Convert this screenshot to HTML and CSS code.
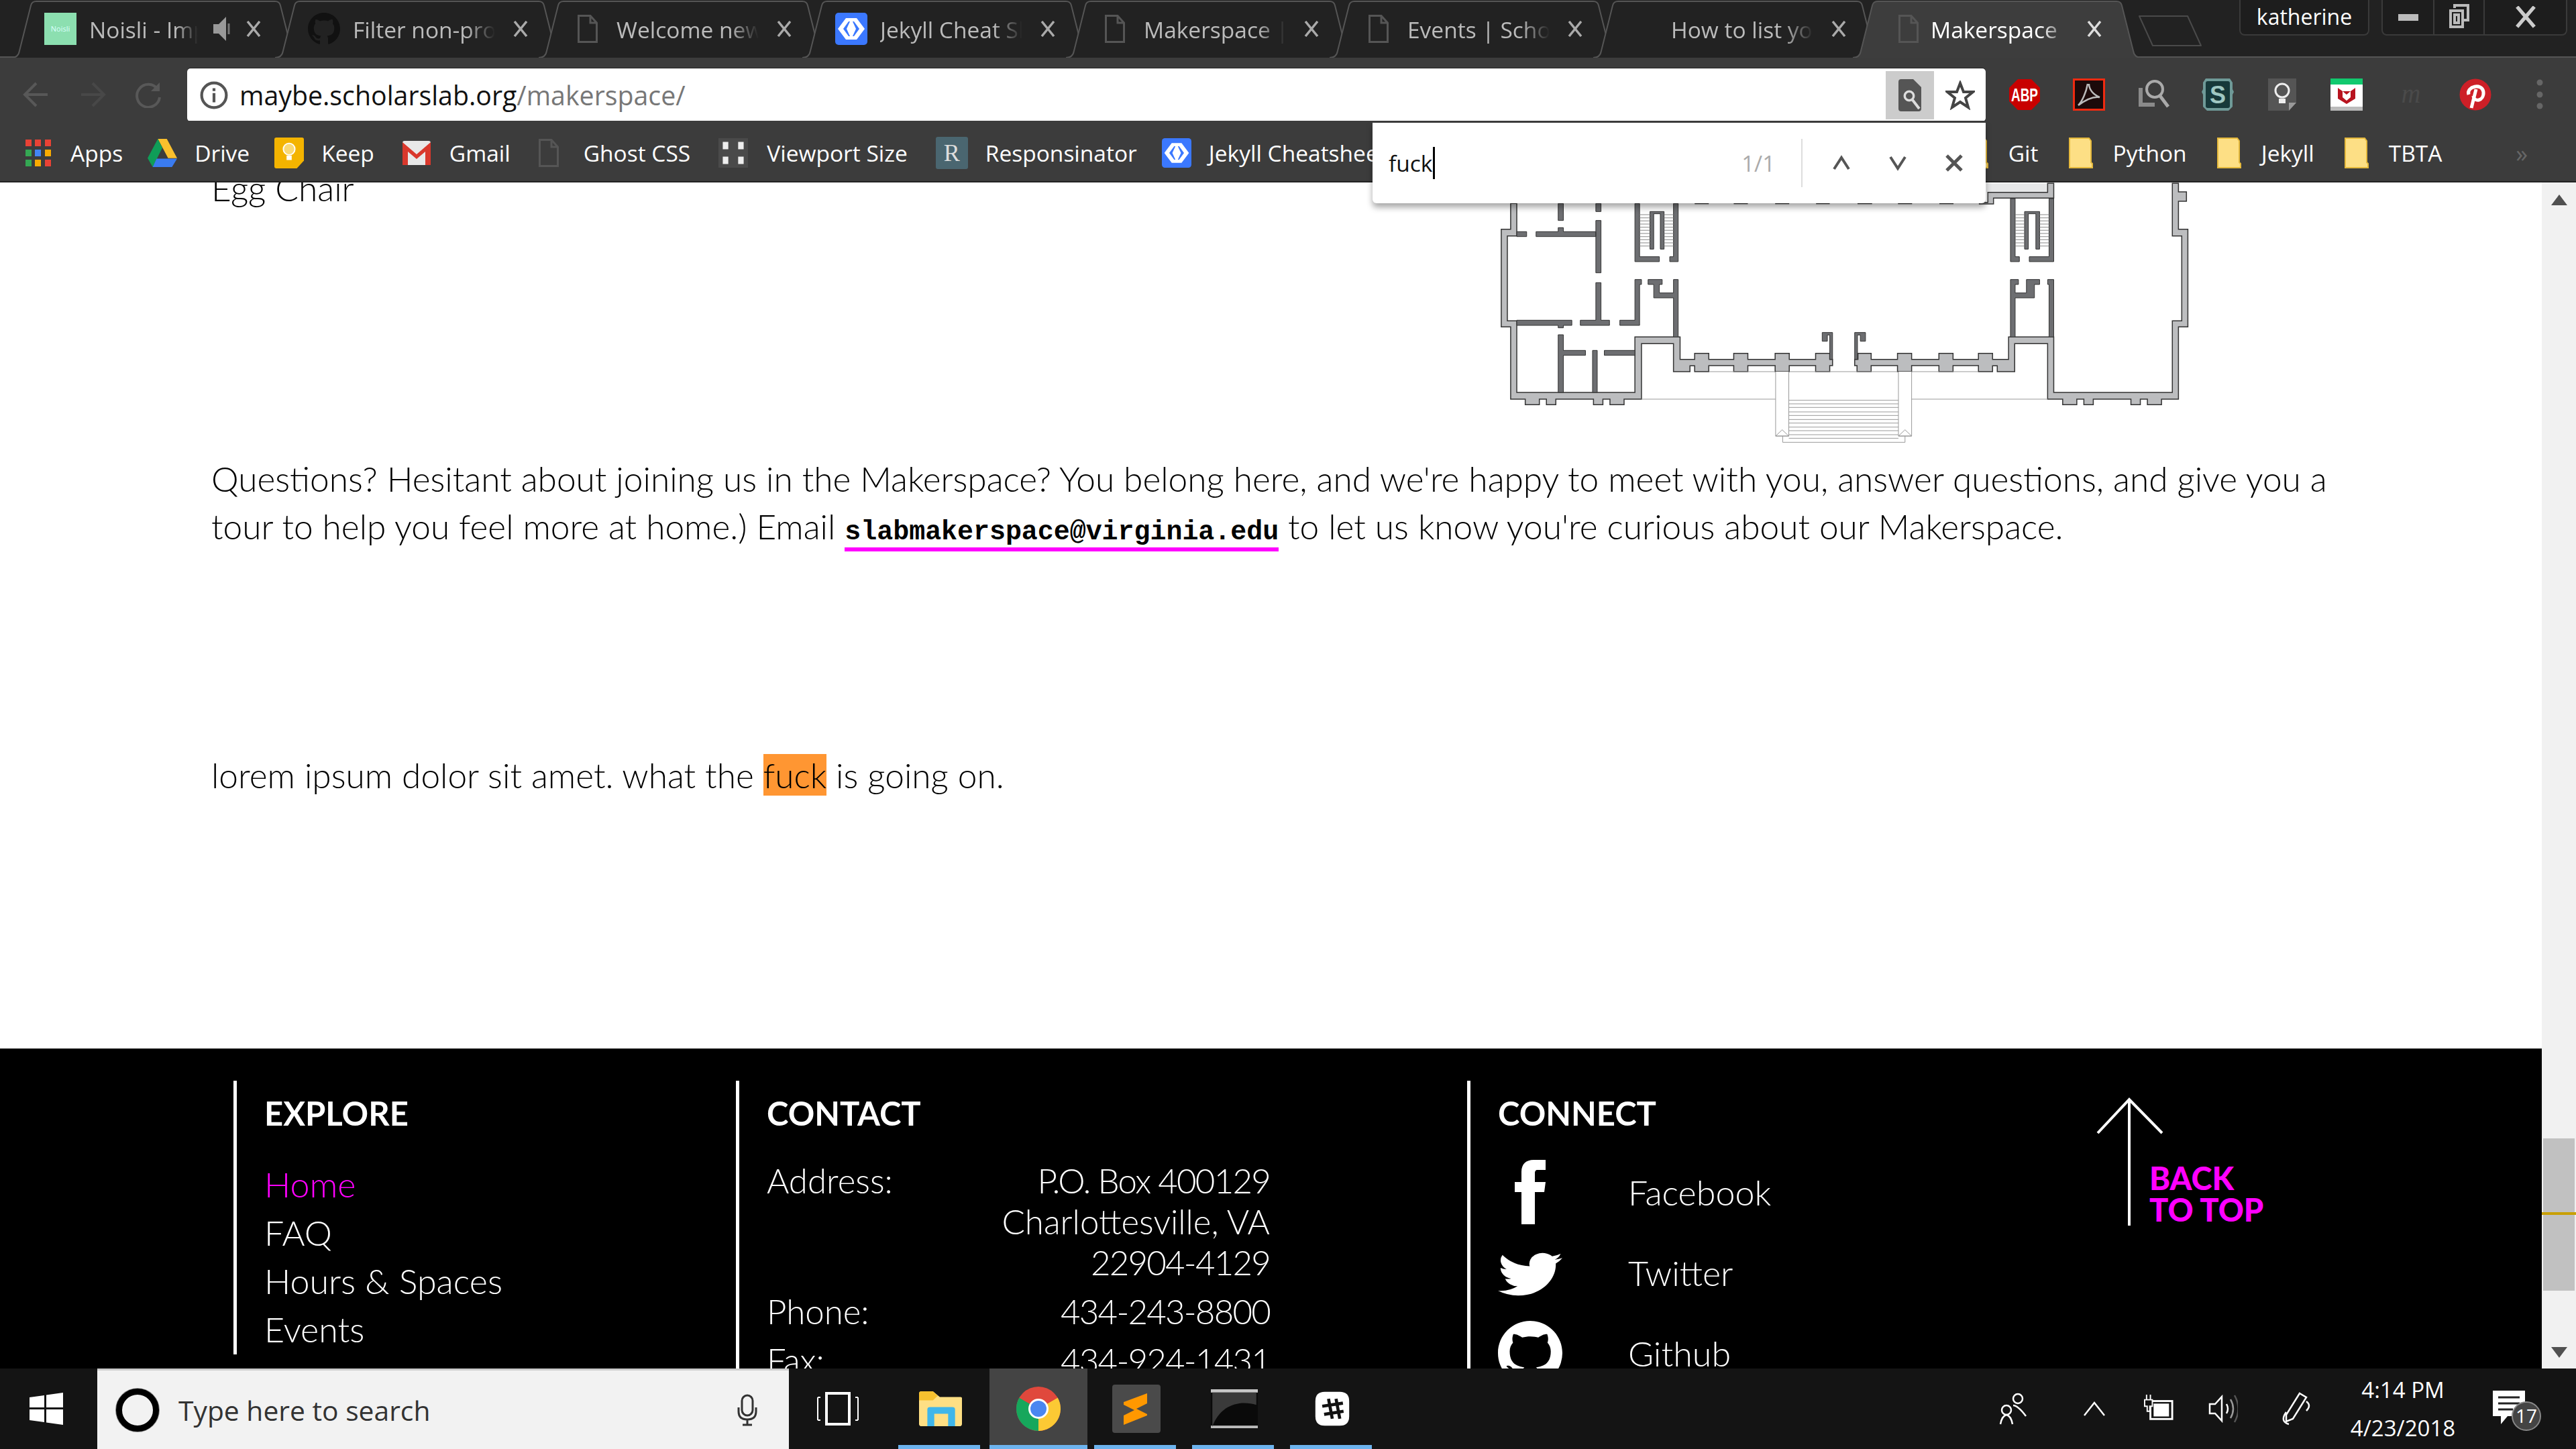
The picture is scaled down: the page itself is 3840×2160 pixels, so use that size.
FILE: index.html
```html
<!DOCTYPE html>
<html lang="en">
<head>
<meta charset="utf-8">
<title>Makerspace</title>
<link rel="stylesheet" href="styles.css">
</head>
<body>
<svg class="defs" width="0" height="0" aria-hidden="true">
  <symbol id="tabshape" viewBox="0 0 430 84" preserveAspectRatio="none"><path d="M0 84C8 84 11 80 12 74L29 8C30 4 33 2 37 2H393C397 2 400 4 401 8L418 74C419 80 422 84 430 84"/></symbol>
  <symbol id="doc" viewBox="0 0 30 42"><path d="M1.5 1.5H19L28.5 12V40.5H1.5ZM19 1.5V12H28.5" fill="none" stroke="currentColor" stroke-width="3"/></symbol>
  <symbol id="cross" viewBox="0 0 22 24"><path d="M2 1L20 23M20 1L2 23" fill="none" stroke="currentColor" stroke-width="3.500"/></symbol>
  <symbol id="jek" viewBox="0 0 48 48"><rect width="48" height="48" rx="5" fill="#3b78ff"/><path d="M16 8H32L44 24L32 40H16L4 24Z" fill="#fff"/><path d="M20 13L12 24L20 35H22L17 24L22 13ZM28 13H26L31 24L26 35H28L36 24Z" fill="#3b78ff"/></symbol>
  <symbol id="folder" viewBox="0 0 36 48"><path d="M1 2H30L33 6V38L35 40V46H1Z" fill="#fddf85" stroke="#e5b93c" stroke-width="2"/></symbol>
</svg>

<div class="screen">
  <header class="tabstrip">
    <div class="tab">
      <svg class="tabbg"><use href="#tabshape"/></svg>
      <span class="noisli">Noisli</span>
      <span class="title short">Noisli - Improve</span>
      <svg class="speaker" viewBox="0 0 30 40"><path d="M1 13H9L20 2V38L9 27H1Z" fill="#999"/><path d="M24 12V28" stroke="#777" stroke-width="3"/></svg>
      <svg class="close"><use href="#cross"/></svg>
    </div>
    <div class="tab">
      <svg class="tabbg"><use href="#tabshape"/></svg>
      <svg class="fav" viewBox="0 0 16 16"><path fill="#111" d="M8 0C3.58 0 0 3.58 0 8c0 3.54 2.29 6.53 5.47 7.59.4.07.55-.17.55-.38 0-.19-.01-.82-.01-1.49-2.01.37-2.53-.49-2.69-.94-.09-.23-.48-.94-.82-1.13-.28-.15-.68-.52-.01-.53.63-.01 1.08.58 1.23.82.72 1.21 1.87.87 2.33.66.07-.52.28-.87.51-1.07-1.78-.2-3.64-.89-3.64-3.95 0-.87.31-1.59.82-2.15-.08-.2-.36-1.02.08-2.12 0 0 .67-.21 2.2.82.64-.18 1.32-.27 2-.27.68 0 1.36.09 2 .27 1.53-1.04 2.2-.82 2.2-.82.44 1.1.16 1.92.08 2.12.51.56.82 1.27.82 2.15 0 3.07-1.87 3.75-3.65 3.95.29.25.54.73.54 1.48 0 1.07-.01 1.93-.01 2.2 0 .21.15.46.55.38A8.012 8.012 0 0 0 16 8c0-4.42-3.58-8-8-8z"/></svg>
      <span class="title">Filter non-profit events</span>
      <svg class="close"><use href="#cross"/></svg>
    </div>
    <div class="tab">
      <svg class="tabbg"><use href="#tabshape"/></svg>
      <svg class="fav docfav"><use href="#doc"/></svg>
      <span class="title">Welcome new members</span>
      <svg class="close"><use href="#cross"/></svg>
    </div>
    <div class="tab">
      <svg class="tabbg"><use href="#tabshape"/></svg>
      <svg class="fav"><use href="#jek"/></svg>
      <span class="title">Jekyll Cheat Sheet</span>
      <svg class="close"><use href="#cross"/></svg>
    </div>
    <div class="tab">
      <svg class="tabbg"><use href="#tabshape"/></svg>
      <svg class="fav docfav"><use href="#doc"/></svg>
      <span class="title">Makerspace | Scholars</span>
      <svg class="close"><use href="#cross"/></svg>
    </div>
    <div class="tab">
      <svg class="tabbg"><use href="#tabshape"/></svg>
      <svg class="fav docfav"><use href="#doc"/></svg>
      <span class="title">Events | Scholars' Lab</span>
      <svg class="close"><use href="#cross"/></svg>
    </div>
    <div class="tab">
      <svg class="tabbg"><use href="#tabshape"/></svg>
      <span class="fav"></span>
      <span class="title">How to list your events</span>
      <svg class="close"><use href="#cross"/></svg>
    </div>
    <div class="tab tab-active">
      <svg class="tabbg"><use href="#tabshape"/></svg>
      <svg class="fav docfav"><use href="#doc"/></svg>
      <span class="title">Makerspace | Scholars' Lab</span>
      <svg class="close"><use href="#cross"/></svg>
    </div>
    <svg class="newtab" viewBox="0 0 98 48"><path d="M4 2H76L96 46H24Z" fill="#222" stroke="#4a4a4a" stroke-width="2" stroke-linejoin="round"/></svg>
    <div class="profile">katherine</div>
    <div class="winctl">
      <span class="winbtn"><svg class="winicon" viewBox="0 0 30 14"><rect width="30" height="10" y="2" fill="#bbb"/></svg></span>
      <span class="winbtn"><svg class="winicon" viewBox="0 0 30 40"><path d="M8 6V2H28V24H22M2 10H20V34H2ZM8 16H14V28H8Z" fill="none" stroke="#bbb" stroke-width="4"/></svg></span>
      <span class="winbtn winclose"><svg class="winicon" viewBox="0 0 28 30"><path d="M2 1L26 29M26 1L2 29" fill="none" stroke="#ccc" stroke-width="5"/></svg></span>
    </div>
  </header>

  <div class="toolbar">
    <div class="nav">
      <svg class="navicon" viewBox="0 0 40 40"><path d="M37 20H5M20 3L3 20L20 37" fill="none" stroke="#585858" stroke-width="4"/></svg>
      <svg class="navicon" viewBox="0 0 40 40"><path d="M3 20H35M20 3L37 20L20 37" fill="none" stroke="#484848" stroke-width="4"/></svg>
      <svg class="navicon" viewBox="0 0 40 40"><path d="M33 12A17 17 0 1 0 36 24" fill="none" stroke="#585858" stroke-width="4"/><path d="M36 2V15H23Z" fill="#585858"/></svg>
    </div>
    <div class="omnibox">
      <svg class="info" viewBox="0 0 40 40"><circle cx="20" cy="20" r="17.5" fill="none" stroke="#555" stroke-width="4"/><path d="M18 17H22V30H18ZM18 10H22V14H18Z" fill="#555"/></svg>
      <span class="url">maybe.scholarslab.org<span class="url-path">/makerspace/</span></span>
      <span class="findbtn"><svg class="findicon" viewBox="0 0 34 48"><path d="M0 4Q0 0 4 0H22L34 12V44Q34 48 30 48H4Q0 48 0 44Z" fill="#555"/><circle cx="16" cy="25" r="8" fill="#ddd" stroke="#ddd"/><circle cx="16" cy="25" r="5" fill="#555"/><path d="M21 31L31 44" stroke="#ddd" stroke-width="4"/></svg></span>
      <svg class="star" viewBox="0 0 44 44"><path d="M22 4L27 17H41L30 26L34 40L22 32L10 40L14 26L3 17H17Z" fill="none" stroke="#444" stroke-width="4"/></svg>
    </div>
    <div class="exts">
      <svg class="ext" viewBox="0 0 48 48"><path d="M14 1H34L47 14V34L34 47H14L1 34V14Z" fill="#c80000"/><text x="24" y="34" class="abp" textLength="40" lengthAdjust="spacingAndGlyphs">ABP</text></svg>
      <svg class="ext" viewBox="0 0 48 48"><rect x="1.5" y="1.5" width="45" height="45" fill="#1c0a0a" stroke="#f02a10" stroke-width="3"/><path d="M22 8C20 20 14 34 8 40C16 34 28 26 40 28C30 24 24 16 24 8" fill="none" stroke="#bbb" stroke-width="2.5"/></svg>
      <svg class="ext" viewBox="0 0 48 48"><circle cx="26" cy="16" r="12" fill="none" stroke="#aaa" stroke-width="4"/><path d="M34 26L46 42" stroke="#aaa" stroke-width="5"/><path d="M2 14H8V36H26V42H2Z" fill="#8a8a8a"/></svg>
      <svg class="ext" viewBox="0 0 48 48"><path d="M6 0H42L46 6V16L48 20L46 24V42L40 48H8L2 42V24L0 20L2 16V6Z" fill="#6f9a98"/><rect x="6" y="4" width="36" height="40" rx="3" fill="#17393a"/><text x="24" y="37" class="sbl">S</text></svg>
      <svg class="ext" viewBox="0 0 48 48"><path d="M3 0H45V36L34 48H3Z" fill="#555"/><path d="M45 36H34V48Z" fill="#999"/><circle cx="24" cy="18" r="10" fill="none" stroke="#eee" stroke-width="3"/><path d="M19 30H29V37H19Z" fill="#eee"/></svg>
      <svg class="ext" viewBox="0 0 48 48"><rect width="48" height="48" rx="3" fill="#fff"/><rect width="48" height="9" fill="#11c96e"/><rect y="42" width="48" height="6" fill="#bbb"/><path d="M11 14L18 19H30L37 14V30L24 38L11 30Z" fill="#b8141f"/><path d="M18 19V28L24 33L30 28V19L24 24Z" fill="#fff"/></svg>
      <svg class="ext" viewBox="0 0 48 48"><text x="24" y="36" class="mext">m</text></svg>
      <svg class="ext" viewBox="0 0 48 48"><circle cx="24" cy="24" r="23.5" fill="#cd1f27"/><path d="M18 44L25 16M14 24C10 12 34 6 36 20C37 34 22 36 21 26" fill="none" stroke="#fff" stroke-width="5"/></svg>
      <svg class="ext" viewBox="0 0 48 48"><circle cx="24" cy="6" r="4.5" fill="#666"/><circle cx="24" cy="24" r="4.5" fill="#666"/><circle cx="24" cy="41" r="4.5" fill="#666"/></svg>
    </div>
  </div>

  <nav class="bookmarks">
    <a class="bm"><svg class="bmicon" viewBox="0 0 40 48"><g><rect x="1" y="4" width="9" height="10" fill="#e94235"/><rect x="15" y="4" width="9" height="10" fill="#e94235"/><rect x="30" y="4" width="9" height="10" fill="#e94235"/><rect x="1" y="19" width="9" height="10" fill="#34a853"/><rect x="15" y="19" width="9" height="10" fill="#4285f4"/><rect x="30" y="19" width="9" height="10" fill="#f9ab00"/><rect x="1" y="34" width="9" height="10" fill="#34a853"/><rect x="15" y="34" width="9" height="10" fill="#f9ab00"/><rect x="30" y="34" width="9" height="10" fill="#e94235"/></g></svg>Apps</a>
    <a class="bm"><svg class="bmicon" viewBox="0 0 46 48"><path d="M16 2H30L46 32H32Z" fill="#fbc02d"/><path d="M16 2L23 16L8 46L0 32Z" fill="#0f9d58"/><path d="M14 33H46L38 46H8Z" fill="#3a7bf0"/></svg>Drive</a>
    <a class="bm"><svg class="bmicon" viewBox="0 0 46 48"><path d="M3 0H43Q46 0 46 3V36L35 48H3Q0 48 0 45V3Q0 0 3 0Z" fill="#f4b400"/><circle cx="23" cy="18" r="9" fill="#f9d976" stroke="#fff" stroke-width="2"/><rect x="19" y="28" width="8" height="7" fill="#fff"/></svg>Keep</a>
    <a class="bm bm-gmail"><svg class="bmicon gm" viewBox="0 0 42 48"><rect y="6" width="42" height="36" rx="3" fill="#e8e8e8"/><path d="M0 8L21 26L42 8V42H34V22L21 33L8 22V42H0Z" fill="#d9382c"/></svg>Gmail</a>
    <a class="bm bm-ghost"><svg class="bmicon docbm" viewBox="0 0 30 42"><use href="#doc"/></svg>Ghost CSS</a>
    <a class="bm bm-view"><svg class="bmicon" viewBox="0 0 48 48"><rect width="48" height="48" fill="#4a4a4a"/><rect x="7" y="6" width="9" height="12" fill="#eee"/><rect x="32" y="6" width="9" height="12" fill="#eee"/><rect x="7" y="30" width="9" height="12" fill="#eee"/><rect x="32" y="30" width="9" height="12" fill="#eee"/></svg>Viewport Size</a>
    <a class="bm bm-resp"><span class="ricon">R</span>Responsinator</a>
    <a class="bm bm-wide"><svg class="bmicon"><use href="#jek"/></svg><span class="bm-clip">Jekyll Cheatsheet</span></a>
    <a class="bm bm-folder"><svg class="bmicon folderic"><use href="#folder"/></svg>Git</a>
    <a class="bm bm-folder"><svg class="bmicon folderic"><use href="#folder"/></svg>Python</a>
    <a class="bm bm-folder"><svg class="bmicon folderic"><use href="#folder"/></svg>Jekyll</a>
    <a class="bm bm-folder"><svg class="bmicon folderic"><use href="#folder"/></svg>TBTA</a>
    <span class="more">»</span>
  </nav>

  <div class="findbar">
    <span class="findtext">fuck<span class="caret"></span></span>
    <span class="findcount">1/1</span>
    <span class="finddiv"></span>
    <svg class="findarrow" viewBox="0 0 28 24"><path d="M3 21L14 4L25 21" fill="none" stroke="#555" stroke-width="4"/></svg>
    <svg class="findarrow" viewBox="0 0 28 24"><path d="M3 3L14 20L25 3" fill="none" stroke="#555" stroke-width="4"/></svg>
    <svg class="findarrow" viewBox="0 0 28 28"><path d="M3 3L25 25M25 3L3 25" fill="none" stroke="#555" stroke-width="5"/></svg>
  </div>

  <div class="viewport">
    <main class="page">
      <section class="upper">
        <p class="egg">Egg Chair</p>
        <svg class="plan" viewBox="0 0 1568 1200" preserveAspectRatio="none">
          <g class="floor-light">
            <rect x="1085" y="10" width="130" height="40" fill="#e6e7e8"/>
            <path d="M74 100V215H54V652H74V975H105V1000H135V975H150V1000H170V975H250V1000H270V975H285V1000H315V975H352V727H420V852H455V826H465V852H495V825H548V852H578V825H636V852H666V825H722V852H752V825H758V797H752V770H722V797H666V770H636V797H578V770H548V797H495V770H465V797H434V697H338V945H87V625H67V245H87V100Z"/>
            <path d="M1480 10H1493V48H1510V90H1493V215H1513V652H1493V975H1457V1000H1427V975H1412V1000H1392V975H1312V1000H1292V975H1277V1000H1247V975H1215V727H1145V852H1108V826H1098V852H1068V825H1014V852H984V825H926V852H896V825H840V852H810V825H805V797H812V770H840V797H896V770H926V797H984V770H1014V797H1068V770H1098V797H1132V697H1228V945H1480V625H1500V245H1480Z"/>
            <path d="M1215 10H1228V76H1100V102H1070V95H1088V50H1215Z"/>
          </g>
          <g class="floor-dark">
            <path d="M175 100H186V176H175ZM255 100H266V136H255ZM255 176H266V410H255ZM255 454H266V622H284V645H222V622H255ZM87 226H108V248H87ZM128 226H175V208H186V226H255V248H128ZM87 622H204V645H186V656H175V645H87Z"/>
            <path d="M306 622H338V440H352V462H348V645H306ZM338 100H348V338H390V360H338ZM420 100H430V360H412V338H420ZM366 440H396V462H390V500H420V440H430V697H420V522H378V462H366Z"/>
            <path d="M175 687H186V757H233V779H186V945H175ZM248 757H258V945H248ZM273 757H338V779H273ZM736 677H758V797H752V688H747V716H736ZM805 677H828V716H817V688H811V797H805Z"/>
            <path d="M1136 78H1146V338H1155V360H1136ZM1218 78H1228V360H1176V338H1218ZM1136 440H1153V462H1146V500H1170V440H1198V462H1187V522H1146V697H1136ZM1215 440H1228V697H1218V462H1215Z"/>
            <path d="M370 136H400V304H392V146H378V304H370ZM1166 136H1198V304H1190V146H1174V304H1166Z"/>
          </g>
          <path class="plan-dash" d="M465 100H495M548 100H578M636 100H666M723 100H752M811 100H842M897 100H927M985 100H1015"/>
          <path class="stair-fine" d="M348 150H370M348 164H370M348 178H370M348 192H370M348 206H370M348 220H370M348 234H370M348 248H370M348 262H370M348 276H370M348 290H370M400 150H420M400 164H420M400 178H420M400 192H420M400 206H420M400 220H420M400 234H420M400 248H420M400 262H420M400 276H420M400 290H420M1146 150H1166M1146 164H1166M1146 178H1166M1146 192H1166M1146 206H1166M1146 220H1166M1146 234H1166M1146 248H1166M1146 262H1166M1146 276H1166M1146 290H1166M1198 150H1218M1198 164H1218M1198 178H1218M1198 192H1218M1198 206H1218M1198 220H1218M1198 234H1218M1198 248H1218M1198 262H1218M1198 276H1218M1198 290H1218"/>
          <path class="stair-line" d="M352 975H637M926 975H1215M495 852H636M666 852H896M926 852H1068M637 852V1140H665V852M898 852V1140H926V852M652 1140V1168H912V1140M665 980H898M665 996H898M665 1012H898M665 1032H898M665 1048H898M665 1066H898M665 1082H898M665 1100H898M665 1116H898M665 1134H898M665 1150H898M637 1140L651 1112L665 1140ZM898 1140L912 1112L926 1140Z"/>
        </svg>
      </section>
      <p class="para">Questions? Hesitant about joining us in the Makerspace? You belong here, and we're happy to meet with you, answer questions, and give you a tour to help you feel more at home.) Email <a class="mail">slabmakerspace@virginia.edu</a> to let us know you're curious about our Makerspace.</p>
      <p class="para para-lorem">lorem ipsum dolor sit amet. what the <mark class="hit">fuck</mark> is going on.</p>
      <footer class="footer">
        <div class="col col-explore">
          <h3 class="colhead">EXPLORE</h3>
          <ul class="links">
            <li class="current">Home</li>
            <li>FAQ</li>
            <li>Hours &amp; Spaces</li>
            <li>Events</li>
          </ul>
        </div>
        <div class="col">
          <h3 class="colhead">CONTACT</h3>
          <dl class="contact">
            <dt>Address:</dt><dd><span class="num">P.O. Box 400129</span><br>Charlottesville, VA<br><span class="num">22904-4129</span></dd>
            <dt>Phone:</dt><dd class="num">434-243-8800</dd>
            <dt>Fax:</dt><dd class="num">434-924-1431</dd>
          </dl>
        </div>
        <div class="col">
          <h3 class="colhead">CONNECT</h3>
          <div class="social"><span class="socicon"><svg class="fb" viewBox="0 0 46 96"><path d="M10 96V48H0V33H10V18C10 6 17 0 28 0H46V15H34C31 15 30 17 30 20V33H46L44 48H30V96Z" fill="#fff"/></svg></span>Facebook</div>
          <div class="social"><span class="socicon"><svg class="tw" viewBox="0 0 16 16" preserveAspectRatio="none"><path fill="#fff" d="M5.026 15c6.038 0 9.341-5.003 9.341-9.334 0-.14 0-.282-.006-.422A6.685 6.685 0 0 0 16 3.542a6.658 6.658 0 0 1-1.889.518 3.301 3.301 0 0 0 1.447-1.817 6.533 6.533 0 0 1-2.087.793A3.286 3.286 0 0 0 7.875 6.03a9.325 9.325 0 0 1-6.767-3.429 3.289 3.289 0 0 0 1.018 4.382A3.323 3.323 0 0 1 .64 6.575v.045a3.288 3.288 0 0 0 2.632 3.218 3.203 3.203 0 0 1-.865.115 3.23 3.23 0 0 1-.614-.057 3.283 3.283 0 0 0 3.067 2.277A6.588 6.588 0 0 1 .78 13.58a6.32 6.32 0 0 1-.78-.045A9.344 9.344 0 0 0 5.026 15z"/></svg></span>Twitter</div>
          <div class="social"><span class="socicon"><svg class="gh" viewBox="0 0 16 16"><path fill="#fff" d="M8 0C3.58 0 0 3.58 0 8c0 3.54 2.29 6.53 5.47 7.59.4.07.55-.17.55-.38 0-.19-.01-.82-.01-1.49-2.01.37-2.53-.49-2.69-.94-.09-.23-.48-.94-.82-1.13-.28-.15-.68-.52-.01-.53.63-.01 1.08.58 1.23.82.72 1.21 1.87.87 2.33.66.07-.52.28-.87.51-1.07-1.78-.2-3.64-.89-3.64-3.95 0-.87.31-1.59.82-2.15-.08-.2-.36-1.02.08-2.12 0 0 .67-.21 2.2.82.64-.18 1.32-.27 2-.27.68 0 1.36.09 2 .27 1.53-1.04 2.2-.82 2.2-.82.44 1.1.16 1.92.08 2.12.51.56.82 1.27.82 2.15 0 3.07-1.87 3.75-3.65 3.95.29.25.54.73.54 1.48 0 1.07-.01 1.93-.01 2.2 0 .21.15.46.55.38A8.012 8.012 0 0 0 16 8c0-4.42-3.58-8-8-8z"/></svg></span>Github</div>
        </div>
        <a class="backtop">
          <svg class="uparrow" viewBox="0 0 100 192"><path d="M49 192V4M2 54L49 4L98 54" fill="none" stroke="#fff" stroke-width="4"/></svg>
          <span class="backtext">BACK<br>TO TOP</span>
        </a>
      </footer>
    </main>
    <aside class="scrollbar">
      <svg class="sbarrow" viewBox="0 0 26 20"><path d="M13 2L25 18H1Z" fill="#505050"/></svg>
      <div class="sbtrack"><div class="sbthumb"><span class="sbmark"></span></div></div>
      <svg class="sbarrow" viewBox="0 0 26 20"><path d="M1 2H25L13 18Z" fill="#505050"/></svg>
    </aside>
  </div>

  <div class="taskbar">
    <div class="start"><svg class="winlogo" viewBox="0 0 50 48"><path d="M0 7L22 4V22H0ZM25 3.500L50 0V22H25ZM0 25H22V44L0 41ZM25 25H50V48L25 44.500Z" fill="#fff"/></svg></div>
    <div class="search">
      <span class="cortana"></span>
      <span class="searchtext">Type here to search</span>
      <svg class="mic" viewBox="0 0 32 48"><rect x="8" y="2" width="16" height="30" rx="8" fill="none" stroke="#333" stroke-width="3"/><path d="M3 20V26Q3 38 16 38Q29 38 29 26V20M16 38V46M9 46H23" fill="none" stroke="#333" stroke-width="3"/></svg>
    </div>
    <div class="task">
      <svg class="taskicon tv" viewBox="0 0 62 50"><path d="M1 8V42M1 8H5M1 42H5M61 8V42M61 8H57M61 42H57" fill="none" stroke="#fff" stroke-width="2"/><rect x="14" y="2" width="34" height="46" fill="none" stroke="#fff" stroke-width="4"/></svg>
    </div>
    <div class="task task-run task-explorer">
      <svg class="taskicon ic-folder" viewBox="0 0 62 62" preserveAspectRatio="none"><path d="M0 4Q0 0 4 0H20L30 10H60Q62 10 62 12V58Q62 62 58 62H4Q0 62 0 58Z" fill="#fedf84"/><path d="M0 4Q0 0 4 0H20L27 8L20 16H0Z" fill="#f7c12f"/><path d="M12 62V32Q12 28 16 28H48Q52 28 52 32V62H42V40H22V62Z" fill="#3fb6ea"/></svg>
    </div>
    <div class="task task-run task-active">
      <svg class="taskicon" viewBox="0 0 66 66"><circle cx="33" cy="33" r="33" fill="#e0483c"/><path d="M33 33L4.400 16.500A33 33 0 0 0 33 66Z" fill="#16a75c"/><path d="M33 33L33 66A33 33 0 0 0 61.600 16.500Z" fill="#fcc934"/><path d="M33 33L4.400 16.500L33 16.500H61.600Z" fill="#e0483c"/><circle cx="33" cy="33" r="15" fill="#fff"/><circle cx="33" cy="33" r="12" fill="#4a86f0"/></svg>
    </div>
    <div class="task task-run">
      <svg class="taskicon ic-sublime" viewBox="0 0 72 72"><rect width="72" height="72" rx="4" fill="#4a4a4a"/><path d="M52 13V28L36 36L52 44V46L17 60V46L33 38L17 30V26Z" fill="#ff9800"/></svg>
    </div>
    <div class="task task-run">
      <svg class="taskicon ic-term" viewBox="0 0 62 60" preserveAspectRatio="none"><rect width="62" height="60" fill="#0a0a0a"/><rect width="62" height="5" fill="#c8c8c8"/><rect y="56" width="62" height="4" fill="#bbb"/><path d="M2 5H60V24C38 16 12 24 2 58Z" fill="#3a3a3a"/></svg>
    </div>
    <div class="task task-run">
      <svg class="taskicon ic-slack" viewBox="0 0 60 60"><path d="M18 3H42Q57 3 57 18V42Q57 57 42 57H18Q3 57 3 42V18Q3 3 18 3Z" fill="#fff"/><path d="M24 14L30 46M36 14L42 46M14 26L47 21M17 39L48 34" stroke="#111" stroke-width="5" fill="none"/></svg>
    </div>
    <div class="tray">
      <span class="traycell tc-120"><svg class="trayicon" viewBox="0 0 44 50"><circle cx="28" cy="10" r="7" fill="none" stroke="#fff" stroke-width="2.500"/><circle cx="11" cy="27" r="7" fill="none" stroke="#fff" stroke-width="2.500"/><path d="M2 48Q4 36 11 34Q18 36 20 48M21 20Q28 20 40 36" fill="none" stroke="#fff" stroke-width="2.500"/></svg></span>
      <span class="traycell tc-120"><svg class="trayicon chev" viewBox="0 0 36 24"><path d="M3 22L18 3L33 22" fill="none" stroke="#fff" stroke-width="2.500"/></svg></span>
      <span class="traycell tc-72"><svg class="trayicon" viewBox="0 0 46 44"><rect x="10" y="10" width="34" height="28" fill="none" stroke="#fff" stroke-width="3"/><rect x="15" y="14" width="24" height="20" fill="#fff"/><path d="M4 0V8M10 0V8M1 8H13V18H9V26H5V18H1Z" stroke="#fff" fill="#111" stroke-width="2"/></svg></span>
      <span class="traycell tc-120"><svg class="trayicon" viewBox="0 0 44 48"><path d="M2 17H10L20 6V42L10 31H2Z" fill="none" stroke="#fff" stroke-width="2.500"/><path d="M27 17Q31 24 27 31" fill="none" stroke="#fff" stroke-width="2.500"/><path d="M33 10Q41 24 33 38" fill="none" stroke="#999" stroke-width="2.500"/><path d="M39 4Q50 24 39 44" fill="none" stroke="#555" stroke-width="2.500"/></svg></span>
      <span class="traycell tc-96"><svg class="trayicon" viewBox="0 0 44 50"><path d="M28 2L38 8L18 40L8 44L8 34Z" fill="none" stroke="#fff" stroke-width="2.500"/><path d="M38 14Q46 20 38 28M8 30Q-2 44 12 48" fill="none" stroke="#fff" stroke-width="2.500"/></svg></span>
      <span class="clock"><span>4:14 PM</span><span>4/23/2018</span></span>
      <span class="traycell tc-92 notif">
        <svg class="note" viewBox="0 0 48 54"><path d="M0 0H48V38H22L12 50V38H0Z" fill="#fff"/><path d="M8 10H40M8 19H40M8 28H30" stroke="#222" stroke-width="3"/></svg>
        <span class="badge">17</span>
      </span>
    </div>
  </div>
</div>
</body>
</html>
```
FILE: styles.css
```css
* { box-sizing: border-box; }
html, body { margin: 0; padding: 0; background: #fff; }
.defs { position: absolute; }
.screen { position: relative; width: 3840px; height: 2160px; display: flex; flex-direction: column; overflow: hidden; font-family: "Open Sans", "Noto Sans", sans-serif; }

/* tab strip */
.tabstrip { height: 86px; flex: none; display: flex; align-items: flex-end; padding-left: 17px; background: #222; border-bottom: 2px solid #555; color: #bbb; }
.tab { position: relative; flex: none; width: 430px; height: 86px; margin-right: -37px; margin-bottom: -2px; display: flex; align-items: center; padding-left: 49px; font-size: 33.500px; }
.tabbg { position: absolute; left: 0; top: 0; width: 430px; height: 86px; fill: #222; stroke: #555; stroke-width: 2px; }
.tab > :not(.tabbg) { position: relative; }
.tab-active { margin-left: -6px; margin-right: 0; padding-left: 59px; color: #fff; }
.tab-active .tabbg { fill: #3d3d3d; }
.tab-active .title { width: 205px; margin-left: 9px; }
.tab-active .close { margin-left: 28px; color: #ddd; }
.fav { width: 48px; height: 48px; flex: none; color: #555; }
.docfav { width: 30px; height: 42px; margin: 0 9px; }
.noisli { width: 48px; height: 48px; flex: none; background: #8cdfb0; color: #dff; font-size: 11px; line-height: 48px; text-align: center; }
.title { width: 212px; margin-left: 19px; margin-top: 1px; white-space: nowrap; overflow: hidden; flex: none; -webkit-mask-image: linear-gradient(to right, #000 80%, transparent 100%); mask-image: linear-gradient(to right, #000 80%, transparent 100%); }
.short { width: 162px; }
.speaker { width: 30px; height: 40px; margin-left: 22px; flex: none; }
.close { width: 22px; height: 24px; margin-left: 27px; flex: none; color: #aaa; }
.short ~ .close { margin-left: 20px; }
.newtab { width: 98px; height: 48px; flex: none; margin: 0 0 14px -7px; align-self: flex-end; }
.profile { width: 194px; height: 53px; margin-left: 55px; align-self: flex-start; flex: none; background: #1d1d1d; border: 2px solid #3a3a3a; border-top: 0; border-radius: 0 0 8px 8px; color: #fff; font-size: 32px; line-height: 50px; text-align: center; }
.winctl { width: 277px; height: 53px; margin-left: 18px; align-self: flex-start; flex: none; display: flex; background: #1d1d1d; border: 2px solid #3a3a3a; border-top: 0; border-radius: 0 0 8px 8px; }
.winbtn { width: 75px; flex: none; display: flex; align-items: center; justify-content: center; border-left: 2px solid #3a3a3a; }
.winbtn:first-child { border-left: 0; }
.winclose { width: auto; flex: 1; }
.winicon { width: 30px; max-height: 40px; }

/* toolbar */
.toolbar { height: 94px; flex: none; display: flex; align-items: flex-start; padding-top: 16px; background: #3c3c3c; }
.nav { width: 279px; height: 78px; flex: none; display: flex; align-items: center; padding-left: 34px; gap: 44px; }
.navicon { width: 40px; height: 40px; flex: none; }
.omnibox { width: 2681px; height: 79px; flex: none; display: flex; align-items: center; padding-left: 19px; background: #fff; border-radius: 5px; box-shadow: 0 -1px 0 #222, 0 1px 0 #222; }
.info { width: 42px; height: 42px; flex: none; }
.url { margin-left: 17px; font-size: 39.300px; color: #111; flex: none; }
.url-path { color: #777; }
.findbtn { width: 72px; height: 72px; margin-left: auto; display: flex; align-items: center; justify-content: center; background: #ccc; }
.findicon { width: 34px; height: 48px; }
.star { width: 44px; height: 44px; margin: 0 16px 0 17px; }
.exts { display: flex; gap: 48px; margin: 15px 0 0 34px; }
.ext { width: 48px; height: 48px; flex: none; }
.abp { font: 700 28px "Liberation Sans", sans-serif; fill: #fff; text-anchor: middle; }
.sbl { font: 700 36px "Liberation Sans", sans-serif; fill: #9fc7c2; text-anchor: middle; }
.mext { font: italic 40px "Liberation Serif", serif; fill: #4a4a4a; text-anchor: middle; }

/* bookmarks */
.bookmarks { height: 92px; flex: none; display: flex; align-items: center; padding: 6px 0 0 35px; gap: 37px; background: #3c3c3c; border-bottom: 2px solid #222; color: #fff; font-size: 33.500px; white-space: nowrap; overflow: hidden; }
.bm { display: flex; align-items: center; gap: 26px; flex: none; }
.bmicon { width: 44px; height: 48px; flex: none; }
.gm { width: 42px; }
.docbm { width: 30px; height: 42px; margin: 0 11px 0 3px; color: #555; }
.folderic { width: 36px; }
.ricon { width: 48px; height: 48px; flex: none; background: #4a6670; border-radius: 3px; color: #ddd; font: 36px/48px "Liberation Serif", serif; text-align: center; }
.bm-gmail { margin-left: 5px; gap: 28px; }
.bm-ghost { margin-left: 2px; }
.bm-view { margin-left: 5px; gap: 28px; }
.bm-resp { margin-left: 5px; }
.bm-wide { width: 1159px; }
.bm-clip { flex: none; }
.bm-folder { gap: 30px; margin-left: 8px; }
.bm-wide + .bm-folder { margin-left: 0; }
.more { margin-left: auto; margin-right: 72px; color: #666; font-size: 36px; }

/* find bar */
.findbar { position: absolute; left: 2046px; top: 183px; width: 914px; height: 120px; display: flex; align-items: center; padding-left: 24px; background: #fff; border-radius: 0 0 6px 6px; box-shadow: 0 6px 10px rgba(0,0,0,.35); color: #111; z-index: 5; }
.findtext { display: flex; align-items: center; font-size: 33.500px; }
.caret { width: 3px; height: 48px; background: #000; margin-left: 1px; }
.findcount { margin-left: auto; color: #aaa; font-size: 33px; }
.finddiv { width: 2px; height: 72px; margin: 0 44px 0 39px; background: #ddd; }
.findarrow { width: 28px; height: 28px; flex: none; margin-right: 56px; }
.findarrow:last-child { margin-right: 33px; }

/* page */
.viewport { flex: 1; min-height: 0; display: flex; }
.page { flex: 1; min-width: 0; overflow: hidden; background: #fff; font-family: Lato, "Open Sans", sans-serif; font-weight: 300; font-size: 51.400px; line-height: 71px; color: #000; }
.upper { height: 433px; margin-top: -27px; display: flex; align-items: flex-start; padding-left: 315px; }
.egg { margin: 0; }
.plan { width: 1100px; height: 400px; margin: 25px 489px 0 auto; flex: none; }
.floor-light path { fill: #bcbdbf; stroke: #333; stroke-width: 1.5px; vector-effect: non-scaling-stroke; }
.floor-dark path { fill: #6d6e71; stroke: #333; stroke-width: 1px; vector-effect: non-scaling-stroke; }
.plan-dash { fill: none; stroke: #222; stroke-width: 6px; }
.stair-fine { fill: none; stroke: #888; stroke-width: 3px; }
.stair-line { fill: #fff; stroke: #999; stroke-width: 1px; vector-effect: non-scaling-stroke; }
.para { width: 3175px; margin: 0 0 0 315px; }
.para-lorem { margin-top: 291px; }
.mail { font-family: "Liberation Mono", monospace; font-weight: 700; font-size: 40px; letter-spacing: -.05px; border-bottom: 6px solid #f0f; }
.hit { background: #ff9632; color: #000; }

/* footer */
.footer { height: 500px; margin-top: 372px; padding: 48px 0 0 348px; display: grid; grid-template-columns: 749px 1090px 938px auto; align-items: start; background: #000; color: #fff; font-size: 51px; }
.col { height: 480px; padding: 18px 0 0 41px; border-left: 5px solid #fff; }
.col-explore { height: 408px; }
.colhead { margin: 0 0 40px; font-size: 49px; font-weight: 700; line-height: 60px; }
.links { margin: 0; padding: 0; list-style: none; font-size: 52px; line-height: 72px; }
.current { color: #f0f; }
.contact { margin: 0; width: 750px; display: grid; grid-template-columns: auto 1fr; row-gap: 12px; line-height: 61px; }
.contact dd { margin: 0; text-align: right; }
.contact dt { font-weight: 300; }
.num { letter-spacing: -1.800px; }
.social { height: 120px; margin-top: -12px; margin-bottom: 12px; display: flex; align-items: center; gap: 98px; font-size: 52px; }
.socicon { width: 96px; height: 96px; flex: none; display: flex; align-items: center; justify-content: center; }
.fb { width: 46px; height: 96px; }
.tw { width: 96px; height: 78px; }
.gh { width: 96px; height: 96px; }
.backtop { display: flex; margin-top: 24px; }
.uparrow { width: 100px; height: 192px; flex: none; }
.backtext { align-self: flex-end; margin-left: -21px; color: #f0f; font-size: 47px; font-weight: 900; line-height: 47px; white-space: nowrap; }

/* scrollbar */
.scrollbar { width: 51px; flex: none; display: flex; flex-direction: column; align-items: center; background: #f1f1f1; padding: 16px 0 14px; }
.sbarrow { width: 26px; height: 20px; flex: none; }
.sbtrack { flex: 1; width: 100%; padding: 1389px 2px 0; }
.sbthumb { position: relative; height: 227px; background: #c1c1c1; }
.sbmark { position: absolute; left: -2px; right: -2px; top: 110px; height: 4px; background: #c9a000; }

/* taskbar */
.taskbar { height: 120px; flex: none; display: flex; align-items: stretch; background: #141414; color: #fff; }
.start { width: 145px; flex: none; display: flex; align-items: center; justify-content: center; }
.winlogo { width: 50px; height: 48px; margin-right: 8px; }
.search { width: 1031px; flex: none; display: flex; align-items: center; padding-left: 28px; background: #f2f2f2; border-top: 3px solid #ccc; color: #333; }
.cortana { width: 64px; height: 64px; flex: none; border-radius: 50%; border: 9px solid #000; box-shadow: 0 0 0 1px #888; background: #f2f2f2; }
.searchtext { margin-left: 29px; font-size: 40.800px; }
.mic { width: 32px; height: 48px; margin-left: auto; margin-right: 46px; flex: none; }
.task { width: 146px; flex: none; position: relative; display: flex; align-items: center; justify-content: center; }
.task-explorer { margin-left: 7px; }
.task-run::after { content: ""; position: absolute; left: 10px; right: 14px; bottom: 0; height: 6px; background: #6db3ee; }
.task-active { background: #444; }
.task-active::after { left: 0; right: 0; }
.taskicon { width: 62px; height: 62px; }
.tv { height: 50px; }
.ic-folder { width: 64px; height: 52px; }
.ic-sublime { width: 72px; height: 72px; }
.ic-term { width: 70px; height: 58px; }
.ic-slack { width: 56px; height: 60px; }
.task-active .taskicon { width: 66px; height: 66px; }
.tray { margin-left: auto; display: flex; align-items: center; padding-right: 54px; }
.traycell { display: flex; align-items: center; justify-content: center; flex: none; }
.tc-120 { width: 120px; }
.tc-96 { width: 96px; }
.tc-92 { width: 92px; }
.tc-72 { width: 72px; }
.trayicon { width: 44px; height: 50px; }
.chev { width: 36px; height: 24px; }
.clock { width: 224px; display: flex; flex-direction: column; align-items: center; gap: 13px; font-size: 33px; line-height: 44px; }
.notif { position: relative; }
.note { width: 48px; height: 54px; }
.badge { position: absolute; left: 50px; top: 16px; width: 44px; height: 44px; border-radius: 50%; background: #444; border: 2px solid #888; font-size: 28px; line-height: 38px; text-align: center; }
```
